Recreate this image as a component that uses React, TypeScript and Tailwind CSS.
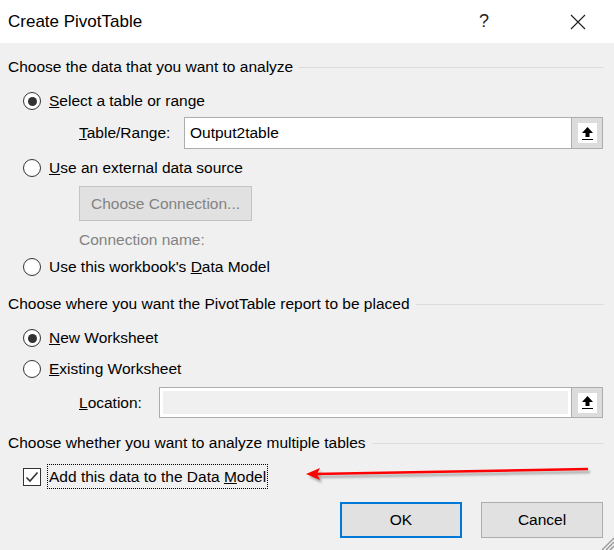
import React from "react";

function Radio({ checked }: { checked?: boolean }) {
  return (
    <span className="w-[18px] h-[18px] rounded-full border border-[#333333] bg-white flex items-center justify-center shrink-0">
      {checked && <span className="w-[9px] h-[9px] rounded-full bg-[#333333]" />}
    </span>
  );
}

function UploadButton() {
  return (
    <div className="w-[32px] self-stretch border border-[#adadad] bg-[#dcdcdc] flex items-center justify-center shrink-0">
      <div className="w-[19px] h-[20px] bg-white flex items-center justify-center">
        <svg width="13" height="15" viewBox="0 0 13 15">
          <polygon points="6.5,1 12,7 1,7" fill="#000" />
          <rect x="4.5" y="6" width="4" height="5" fill="#000" />
          <rect x="1" y="13" width="11" height="1" fill="#000" />
        </svg>
      </div>
    </div>
  );
}

function Heading({ text }: { text: string }) {
  return (
    <div className="flex items-center h-[24px] pr-[10px]">
      <span className="whitespace-nowrap">{text}</span>
      <div className="flex-1 h-px bg-[#dcdcdc] ml-[6px]" />
    </div>
  );
}

export default function App() {
  return (
    <div className="relative w-[614px] h-[550px] bg-[#f0f0f0] text-[15.5px] text-black font-['Liberation_Sans',Arial,sans-serif] overflow-hidden">
      {/* Title bar */}
      <div className="h-[43px] bg-white flex items-center pl-[8px]">
        <span className="text-[17px] flex-1">Create PivotTable</span>
        <span className="text-[18px] w-[20px] text-center mr-[76px] text-[#222]">?</span>
        <svg width="16" height="16" viewBox="0 0 16 16" className="mr-[28px]">
          <path d="M1 1 L15 15 M15 1 L1 15" stroke="#222" strokeWidth="1.2" />
        </svg>
      </div>

      <div className="pl-[8px] flex flex-col">
        <div className="mt-[12px]">
          <Heading text="Choose the data that you want to analyze" />
        </div>

        <div className="mt-[10px] h-[24px] flex items-center pl-[15px] gap-[8px]">
          <Radio checked />
          <span>
            <span className="underline">S</span>elect a table or range
          </span>
        </div>

        <div className="mt-[4px] h-[32px] flex items-stretch pl-[71px] pr-[11px]">
          <span className="w-[105px] flex items-center">
            <span>
              <span className="underline">T</span>able/Range:
            </span>
          </span>
          <div className="flex-1 border border-[#adadad] bg-white flex items-center pl-[5px] -mr-px">
            Output2table
          </div>
          <UploadButton />
        </div>

        <div className="mt-[7px] h-[24px] flex items-center pl-[15px] gap-[8px]">
          <Radio />
          <span>
            <span className="underline">U</span>se an external data source
          </span>
        </div>

        <div className="mt-[6px] pl-[71px]">
          <div className="w-[173px] h-[35px] border border-[#c4c4c4] bg-[#e1e1e1] flex items-center justify-center text-[#838383]">
            Choose Connection...
          </div>
        </div>

        <div className="mt-[7px] h-[24px] flex items-center pl-[71px] text-[#838383]">
          Connection name:
        </div>

        <div className="mt-[3px] h-[24px] flex items-center pl-[15px] gap-[8px]">
          <Radio />
          <span>
            Use this workbook's <span className="underline">D</span>ata Model
          </span>
        </div>

        <div className="mt-[13px]">
          <Heading text="Choose where you want the PivotTable report to be placed" />
        </div>

        <div className="mt-[10px] h-[24px] flex items-center pl-[15px] gap-[8px]">
          <Radio checked />
          <span>
            <span className="underline">N</span>ew Worksheet
          </span>
        </div>

        <div className="mt-[7px] h-[24px] flex items-center pl-[15px] gap-[8px]">
          <Radio />
          <span>
            <span className="underline">E</span>xisting Worksheet
          </span>
        </div>

        <div className="mt-[6px] h-[31px] flex items-stretch pl-[71px] pr-[11px]">
          <span className="w-[80px] flex items-center">
            <span>
              <span className="underline">L</span>ocation:
            </span>
          </span>
          <div className="flex-1 border border-[#adadad] -mr-px">
            <div className="w-full h-full border-[3px] border-white bg-[#f0f0f0]" />
          </div>
          <UploadButton />
        </div>

        <div className="mt-[13px]">
          <Heading text="Choose whether you want to analyze multiple tables" />
        </div>

        <div className="mt-[9px] h-[25px] flex items-center pl-[15px] gap-[6px]">
          <span className="w-[18px] h-[18px] border border-[#333333] bg-white flex items-center justify-center">
            <svg width="14" height="12" viewBox="0 0 14 12">
              <path d="M1.5 6.5 L5 10 L12.5 1.5" stroke="#333" strokeWidth="1.6" fill="none" />
            </svg>
          </span>
          <span className="h-[25px] border border-dotted border-black flex items-center px-[1px]">
            <span>
              Add this data to the Data <span className="underline">M</span>odel
            </span>
          </span>
        </div>

        <div className="mt-[13px] flex justify-end gap-[19px] pr-[11px]">
          <div className="w-[122px] h-[36px] border-2 border-[#0078d7] bg-[#e1e1e1] flex items-center justify-center">
            OK
          </div>
          <div className="w-[122px] h-[36px] border border-[#adadad] bg-[#e1e1e1] flex items-center justify-center">
            Cancel
          </div>
        </div>
      </div>

      {/* resize grip */}
      <svg className="absolute right-0 bottom-0" width="14" height="14" viewBox="0 0 14 14">
        <path d="M14 2 L2 14 M14 6 L6 14 M14 10 L10 14" stroke="#9a9a9a" strokeWidth="1.4" />
      </svg>

      {/* red annotation arrow */}
      <svg className="absolute left-0 top-0 pointer-events-none" width="614" height="550">
        <defs>
          <filter id="sh" x="-10%" y="-200%" width="120%" height="500%">
            <feGaussianBlur stdDeviation="1.2" />
          </filter>
        </defs>
        <g filter="url(#sh)" opacity="0.45">
          <path d="M316 477 L590 472" stroke="#555" strokeWidth="2.5" />
          <polygon points="309,477 322,471 320,477 322,483" fill="#555" />
        </g>
        <path d="M314 474 L588 469" stroke="#ff0000" strokeWidth="2.5" />
        <polygon points="306,474 320,468 317,474 320,480" fill="#ff0000" />
      </svg>
    </div>
  );
}
